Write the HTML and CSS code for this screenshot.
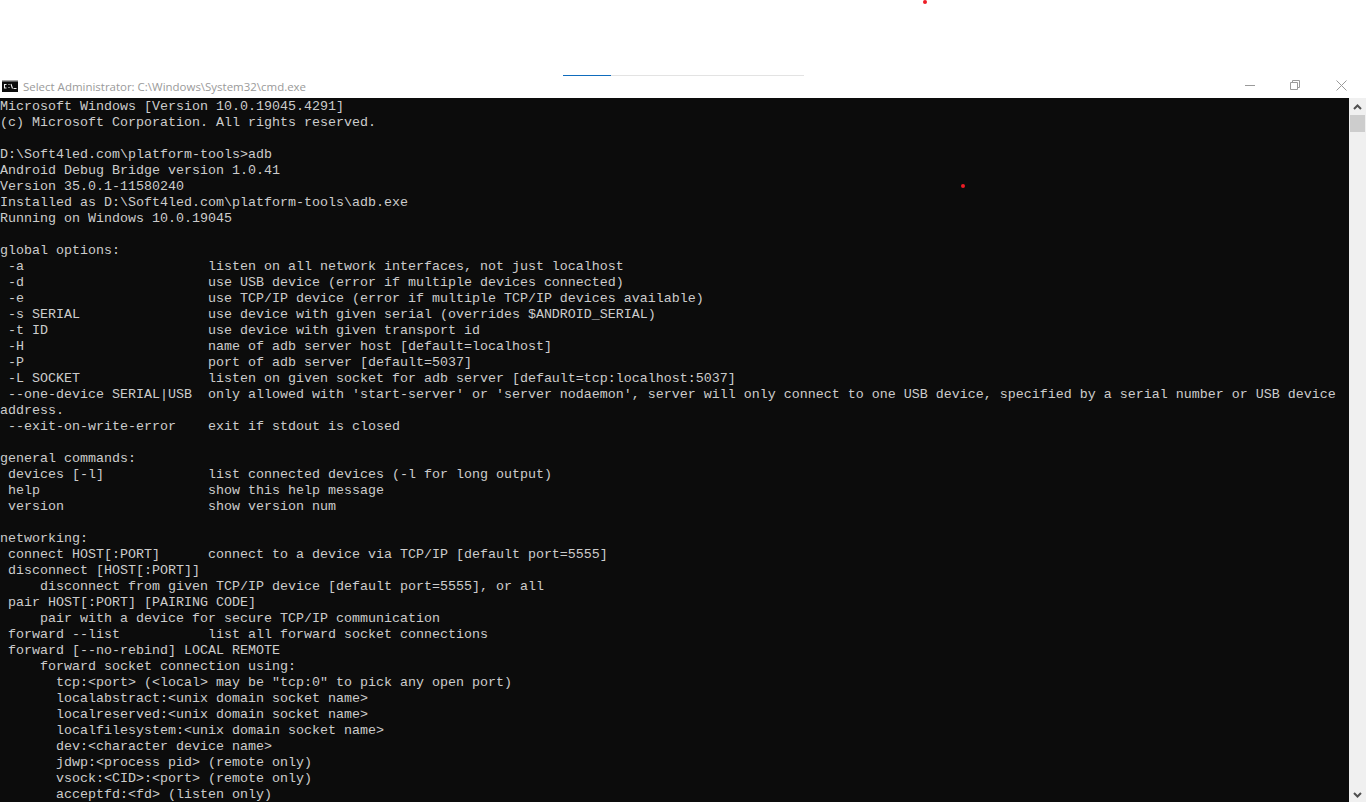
FILE: index.html
```html
<!DOCTYPE html>
<html lang="en">
<head>
<meta charset="utf-8">
<title>cmd.exe</title>
<link rel="stylesheet" href="styles.css">
</head>
<body>
<div class="page">
  <div class="loader"><div class="loader-fill"></div></div>
  <span class="dot dot-a"></span>
  <span class="dot dot-b"></span>
  <div class="window">
    <header class="titlebar">
      <svg class="app-icon" width="16" height="12" viewBox="0 0 16 12"><rect width="16" height="12" fill="#0c0c0c"/><rect width="16" height="1.500" fill="#a8a8a8"/><path d="M4.500 4.500H2.500v3.500h2M6.500 4.500h1M6.500 7.500h1M9 4l1.500 4.500M11.500 8.500h3" stroke="#f0f0f0" stroke-width="1.100" fill="none"/></svg>
      <span class="title">Select Administrator: C:\Windows\System32\cmd.exe</span>
      <div class="controls">
        <svg class="ctl ctl-min" width="10" height="10" viewBox="0 0 10 10"><path d="M0 5.500h10" stroke="#9a9a9a"/></svg>
        <svg class="ctl ctl-max" width="10" height="10" viewBox="0 0 10 10"><path d="M.5 2.500h7v7h-7zM2.500 2.500v-2h7v7h-2" stroke="#9a9a9a" fill="none"/></svg>
        <svg class="ctl ctl-close" width="11" height="11" viewBox="0 0 11 11"><path d="M.5.5l10 10M10.500.5l-10 10" stroke="#9a9a9a" fill="none"/></svg>
      </div>
    </header>
    <div class="console">
<pre class="output">Microsoft Windows [Version 10.0.19045.4291]
(c) Microsoft Corporation. All rights reserved.

D:\Soft4led.com\platform-tools&gt;adb
Android Debug Bridge version 1.0.41
Version 35.0.1-11580240
Installed as D:\Soft4led.com\platform-tools\adb.exe
Running on Windows 10.0.19045

global options:
 -a                       listen on all network interfaces, not just localhost
 -d                       use USB device (error if multiple devices connected)
 -e                       use TCP/IP device (error if multiple TCP/IP devices available)
 -s SERIAL                use device with given serial (overrides $ANDROID_SERIAL)
 -t ID                    use device with given transport id
 -H                       name of adb server host [default=localhost]
 -P                       port of adb server [default=5037]
 -L SOCKET                listen on given socket for adb server [default=tcp:localhost:5037]
 --one-device SERIAL|USB  only allowed with 'start-server' or 'server nodaemon', server will only connect to one USB device, specified by a serial number or USB device
address.
 --exit-on-write-error    exit if stdout is closed

general commands:
 devices [-l]             list connected devices (-l for long output)
 help                     show this help message
 version                  show version num

networking:
 connect HOST[:PORT]      connect to a device via TCP/IP [default port=5555]
 disconnect [HOST[:PORT]]
     disconnect from given TCP/IP device [default port=5555], or all
 pair HOST[:PORT] [PAIRING CODE]
     pair with a device for secure TCP/IP communication
 forward --list           list all forward socket connections
 forward [--no-rebind] LOCAL REMOTE
     forward socket connection using:
       tcp:&lt;port&gt; (&lt;local&gt; may be "tcp:0" to pick any open port)
       localabstract:&lt;unix domain socket name&gt;
       localreserved:&lt;unix domain socket name&gt;
       localfilesystem:&lt;unix domain socket name&gt;
       dev:&lt;character device name&gt;
       jdwp:&lt;process pid&gt; (remote only)
       vsock:&lt;CID&gt;:&lt;port&gt; (remote only)
       acceptfd:&lt;fd&gt; (listen only)</pre>
      <div class="scrollbar">
        <svg class="arrow arrow-up" width="9" height="6" viewBox="0 0 9 6"><path d="M1 5l3.500-3.500L8 5" stroke="#505050" stroke-width="2" fill="none"/></svg>
        <div class="thumb"></div>
        <div class="track"></div>
        <svg class="arrow arrow-down" width="9" height="6" viewBox="0 0 9 6"><path d="M1 1l3.500 3.500L8 1" stroke="#505050" stroke-width="2" fill="none"/></svg>
      </div>
    </div>
  </div>
</div>
</body>
</html>
```
FILE: styles.css
```css
html, body { margin: 0; padding: 0; height: 100%; background: #fff; overflow: hidden; }
.page { position: relative; height: 802px; overflow: hidden; padding-top: 77px; box-sizing: border-box; display: flex; flex-direction: column; }
.loader { position: absolute; left: 563px; top: 75px; width: 241px; height: 1px; background: #e3e3e3; }
.loader-fill { width: 48px; height: 1px; background: #0f6cbd; }
.dot { position: absolute; width: 4px; height: 4px; border-radius: 50%; background: #ee1c25; }
.dot-a { left: 923px; top: 0; }
.dot-b { left: 961px; top: 184px; }
.window { flex: 1; min-height: 0; display: flex; flex-direction: column; }
.titlebar { height: 21px; flex: none; display: flex; align-items: center; padding-left: 2px; background: #fff; }
.app-icon { flex: none; margin-right: 5px; margin-top: -3px; }
.title { font: 11.47px/16px "Open Sans", sans-serif; color: #9a9a9a; white-space: nowrap; margin-top: -2px; }
.controls { margin-left: auto; display: flex; align-items: center; padding-right: 19px; gap: 36px; margin-top: -5px; }
.ctl { display: block; flex: none; }
.ctl-min { margin-right: -1px; }
.console { flex: 1; min-height: 0; display: flex; background: #0c0c0c; overflow: hidden; }
.output { flex: 1; min-width: 0; margin: 0; padding-top: 1px; font: 13.333px/16px "Liberation Mono", monospace; color: #cccccc; white-space: pre; overflow: hidden; }
.scrollbar { width: 17px; flex: none; background: #f0f0f0; display: flex; flex-direction: column; align-items: center; }
.arrow { flex: none; }
.arrow-up { margin: 6px 0 5px; }
.arrow-down { margin: 5px 0 4px; }
.thumb { width: 15px; height: 17px; flex: none; background: #cdcdcd; }
.track { flex: 1; }
```
